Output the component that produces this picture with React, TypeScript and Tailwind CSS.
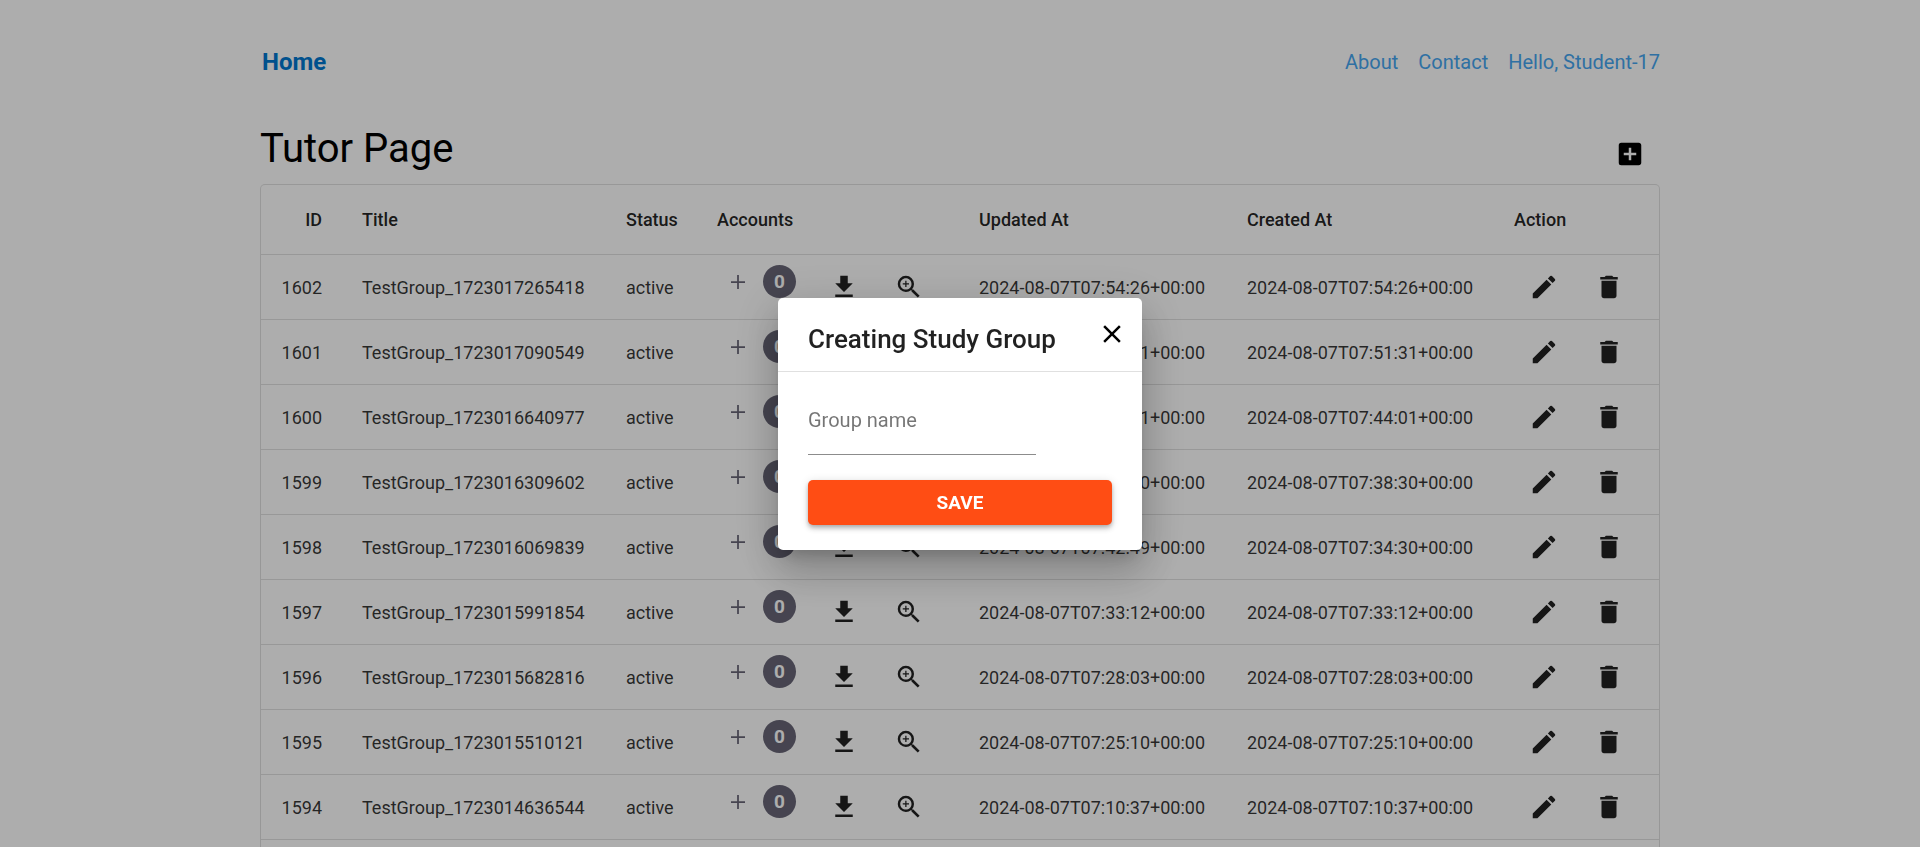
import { MdAddBox, MdClose, MdDelete, MdEdit, MdGetApp, MdZoomIn } from "react-icons/md";

type Group = {
  id: number;
  title: string;
  status: string;
  accounts: number;
  updatedAt: string;
  createdAt: string;
};

const groups: Group[] = [
  { id: 1602, title: "TestGroup_1723017265418", status: "active", accounts: 0, updatedAt: "2024-08-07T07:54:26+00:00", createdAt: "2024-08-07T07:54:26+00:00" },
  { id: 1601, title: "TestGroup_1723017090549", status: "active", accounts: 0, updatedAt: "2024-08-07T07:51:31+00:00", createdAt: "2024-08-07T07:51:31+00:00" },
  { id: 1600, title: "TestGroup_1723016640977", status: "active", accounts: 0, updatedAt: "2024-08-07T07:44:01+00:00", createdAt: "2024-08-07T07:44:01+00:00" },
  { id: 1599, title: "TestGroup_1723016309602", status: "active", accounts: 0, updatedAt: "2024-08-07T07:38:30+00:00", createdAt: "2024-08-07T07:38:30+00:00" },
  { id: 1598, title: "TestGroup_1723016069839", status: "active", accounts: 0, updatedAt: "2024-08-07T07:42:49+00:00", createdAt: "2024-08-07T07:34:30+00:00" },
  { id: 1597, title: "TestGroup_1723015991854", status: "active", accounts: 0, updatedAt: "2024-08-07T07:33:12+00:00", createdAt: "2024-08-07T07:33:12+00:00" },
  { id: 1596, title: "TestGroup_1723015682816", status: "active", accounts: 0, updatedAt: "2024-08-07T07:28:03+00:00", createdAt: "2024-08-07T07:28:03+00:00" },
  { id: 1595, title: "TestGroup_1723015510121", status: "active", accounts: 0, updatedAt: "2024-08-07T07:25:10+00:00", createdAt: "2024-08-07T07:25:10+00:00" },
  { id: 1594, title: "TestGroup_1723014636544", status: "active", accounts: 0, updatedAt: "2024-08-07T07:10:37+00:00", createdAt: "2024-08-07T07:10:37+00:00" },
];

const iconButton = "flex size-[60px] shrink-0 items-center justify-center";
const headCell = "px-5 pt-0.5 font-medium";
const textCell = "px-5 pt-0.5 text-black/80";

function PlusIcon() {
  return (
    <svg viewBox="0 0 14 14" className="size-3.5" fill="none" stroke="currentColor" strokeWidth="1.75" aria-hidden="true">
      <path d="M7 0v14M0 7h14" />
    </svg>
  );
}

function GroupRow({ group }: { group: Group }) {
  return (
    <tr className="h-[65px] border-b border-black/12">
      <td className={`${textCell} text-right`}>{group.id}</td>
      <td className={textCell}>{group.title}</td>
      <td className={textCell}>{group.status}</td>
      <td className="px-5">
        <div className="flex h-[60px] items-center gap-[5px]">
          <button type="button" aria-label="Add accounts" className="flex h-[60px] w-[92px] items-center justify-between pr-[13px] pb-2.5 pl-3.5 text-[#676576]">
            <PlusIcon />
            <span className="flex size-[33px] items-center justify-center rounded-full bg-[#676576] text-[19px] font-bold text-white">
              {group.accounts}
            </span>
          </button>
          <button type="button" aria-label="Download accounts" className={iconButton}>
            <MdGetApp className="size-[30px]" />
          </button>
          <button type="button" aria-label="View accounts" className={iconButton}>
            <MdZoomIn className="size-[30px]" />
          </button>
        </div>
      </td>
      <td className={textCell}>{group.updatedAt}</td>
      <td className={textCell}>{group.createdAt}</td>
      <td className="px-5">
        <div className="flex h-[60px] items-center gap-[5px]">
          <button type="button" aria-label="Edit group" className={iconButton}>
            <MdEdit className="size-[30px]" />
          </button>
          <button type="button" aria-label="Delete group" className={iconButton}>
            <MdDelete className="size-[30px]" />
          </button>
        </div>
      </td>
    </tr>
  );
}

function GroupTable() {
  return (
    <div className="flex-1 rounded-t-[5px] border border-b-0 border-black/12">
      <table className="w-full table-fixed border-collapse text-left text-lg whitespace-nowrap text-black/87">
        <colgroup>
          <col className="w-[81px]" />
          <col className="w-[264px]" />
          <col className="w-[91px]" />
          <col className="w-[262px]" />
          <col className="w-[268px]" />
          <col className="w-[267px]" />
          <col />
        </colgroup>
        <thead>
          <tr className="h-[69px] border-b border-black/12">
            <th className={`${headCell} text-right`}>ID</th>
            <th className={headCell}>Title</th>
            <th className={headCell}>Status</th>
            <th className={headCell}>Accounts</th>
            <th className={headCell}>Updated At</th>
            <th className={headCell}>Created At</th>
            <th className={headCell}>Action</th>
          </tr>
        </thead>
        <tbody>
          {groups.map((group) => (
            <GroupRow key={group.id} group={group} />
          ))}
        </tbody>
      </table>
    </div>
  );
}

function CreateGroupDialog() {
  return (
    <div className="fixed inset-0 flex items-center justify-center bg-black/32">
      <div
        role="dialog"
        aria-modal="true"
        aria-labelledby="dialog-title"
        className="w-[364px] rounded-[5px] bg-white shadow-[0_11px_15px_-7px_rgba(0,0,0,0.2),0_24px_38px_3px_rgba(0,0,0,0.14),0_9px_46px_8px_rgba(0,0,0,0.12)]"
      >
        <div className="flex h-[74px] items-start justify-between border-b border-black/12 pl-[30px]">
          <h2 id="dialog-title" className="pt-[23px] text-[26px] leading-9 font-medium text-black/87">
            Creating Study Group
          </h2>
          <button type="button" aria-label="Close" className="mt-1.5 flex size-[60px] shrink-0 items-center justify-center">
            <MdClose className="size-[30px]" />
          </button>
        </div>
        <form className="px-[30px] pt-3.5 pb-[25px]">
          <input
            type="text"
            aria-label="Group name"
            placeholder="Group name"
            className="block h-[69px] w-[228px] border-b border-black/45 text-xl outline-none placeholder:text-black/54"
          />
          <button
            type="submit"
            className="mt-[25px] h-[45px] w-full rounded-[5px] bg-[#ff4d14] pt-0.5 text-[19px] font-bold text-white shadow-[0_2px_4px_-1px_rgba(0,0,0,0.2),0_4px_5px_0_rgba(0,0,0,0.14),0_1px_10px_0_rgba(0,0,0,0.12)]"
          >
            SAVE
          </button>
        </form>
      </div>
    </div>
  );
}

export default function App() {
  return (
    <div className="h-screen overflow-hidden bg-white font-['Roboto',sans-serif] text-black">
      <div className="mx-auto flex h-full max-w-[1400px] flex-col">
        <header className="flex h-[124px] shrink-0 items-center justify-between">
          <a href="#home" className="pl-0.5 text-2xl font-bold text-[#0078d0]">
            Home
          </a>
          <nav className="flex gap-5 text-xl text-[#46a6f0]">
            <a href="#about">About</a>
            <a href="#contact">Contact</a>
            <a href="#profile">Hello, Student-17</a>
          </nav>
        </header>
        <main className="flex flex-1 flex-col">
          <div className="flex h-[60px] items-start justify-between">
            <h1 className="text-[40px] leading-[50px] font-normal">Tutor Page</h1>
            <button type="button" aria-label="Create study group" className={iconButton}>
              <MdAddBox className="size-[30px]" />
            </button>
          </div>
          <GroupTable />
        </main>
      </div>
      <CreateGroupDialog />
    </div>
  );
}
